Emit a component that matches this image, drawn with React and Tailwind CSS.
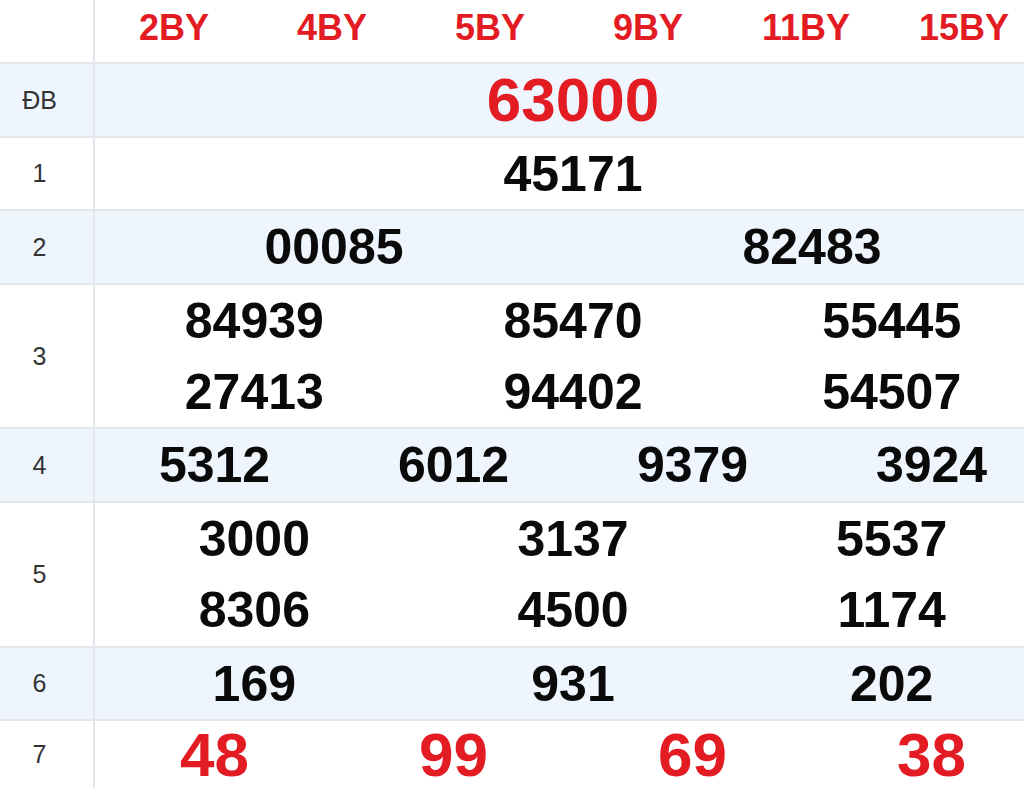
import React from "react";

const font = { fontFamily: '"Liberation Sans", Arial, sans-serif' };

function Label({ children }) {
  return (
    <div className="w-[95px] shrink-0 border-r-2 border-[#e3e6ea] flex items-center justify-center pr-[14px] text-[25px] leading-none text-[#333]">
      {children}
    </div>
  );
}

function Row({ label, bg, h, children, last }) {
  return (
    <div
      className={`flex ${bg ? "bg-[#eef5fd]" : "bg-white"} ${last ? "" : "border-b-2 border-[#e3e6ea]"} ${h}`}
    >
      <Label>{label}</Label>
      <div className="flex-1 flex flex-col">{children}</div>
    </div>
  );
}

function Line({ items, cls }) {
  return (
    <div className="flex flex-1">
      {items.map((t, i) => (
        <div key={i} className={`flex-1 flex items-center justify-center font-bold leading-none ${cls}`}>
          {t}
        </div>
      ))}
    </div>
  );
}

export default function App() {
  const black = "text-[50px] text-[#0a0a0a]";
  const red = "text-[62px] text-[#e31b23]";
  return (
    <div className="w-[1024px] h-[788px] overflow-hidden bg-white" style={font}>
      <div className="w-[1051px]">
        <div className="flex h-[64px] border-b-2 border-[#e3e6ea] bg-white">
          <div className="w-[95px] shrink-0 border-r-2 border-[#e3e6ea]" />
          <div className="flex">
            {["2BY", "4BY", "5BY", "9BY", "11BY", "15BY"].map((t) => (
              <div key={t} className="w-[158px] flex items-center justify-center pb-[6px] text-[36px] leading-none font-bold text-[#e31b23]">
                {t}
              </div>
            ))}
          </div>
        </div>
        <Row label="ĐB" bg h="h-[74px]">
          <Line items={["63000"]} cls={red} />
        </Row>
        <Row label="1" h="h-[73px]">
          <Line items={["45171"]} cls={black} />
        </Row>
        <Row label="2" bg h="h-[74px]">
          <Line items={["00085", "82483"]} cls={black} />
        </Row>
        <Row label="3" h="h-[144px]">
          <Line items={["84939", "85470", "55445"]} cls={black} />
          <Line items={["27413", "94402", "54507"]} cls={black} />
        </Row>
        <Row label="4" bg h="h-[74px]">
          <Line items={["5312", "6012", "9379", "3924"]} cls={black} />
        </Row>
        <Row label="5" h="h-[145px]">
          <Line items={["3000", "3137", "5537"]} cls={black} />
          <Line items={["8306", "4500", "1174"]} cls={black} />
        </Row>
        <Row label="6" bg h="h-[73px]">
          <Line items={["169", "931", "202"]} cls={black} />
        </Row>
        <Row label="7" h="h-[67px]" last>
          <Line items={["48", "99", "69", "38"]} cls={red} />
        </Row>
      </div>
    </div>
  );
}
